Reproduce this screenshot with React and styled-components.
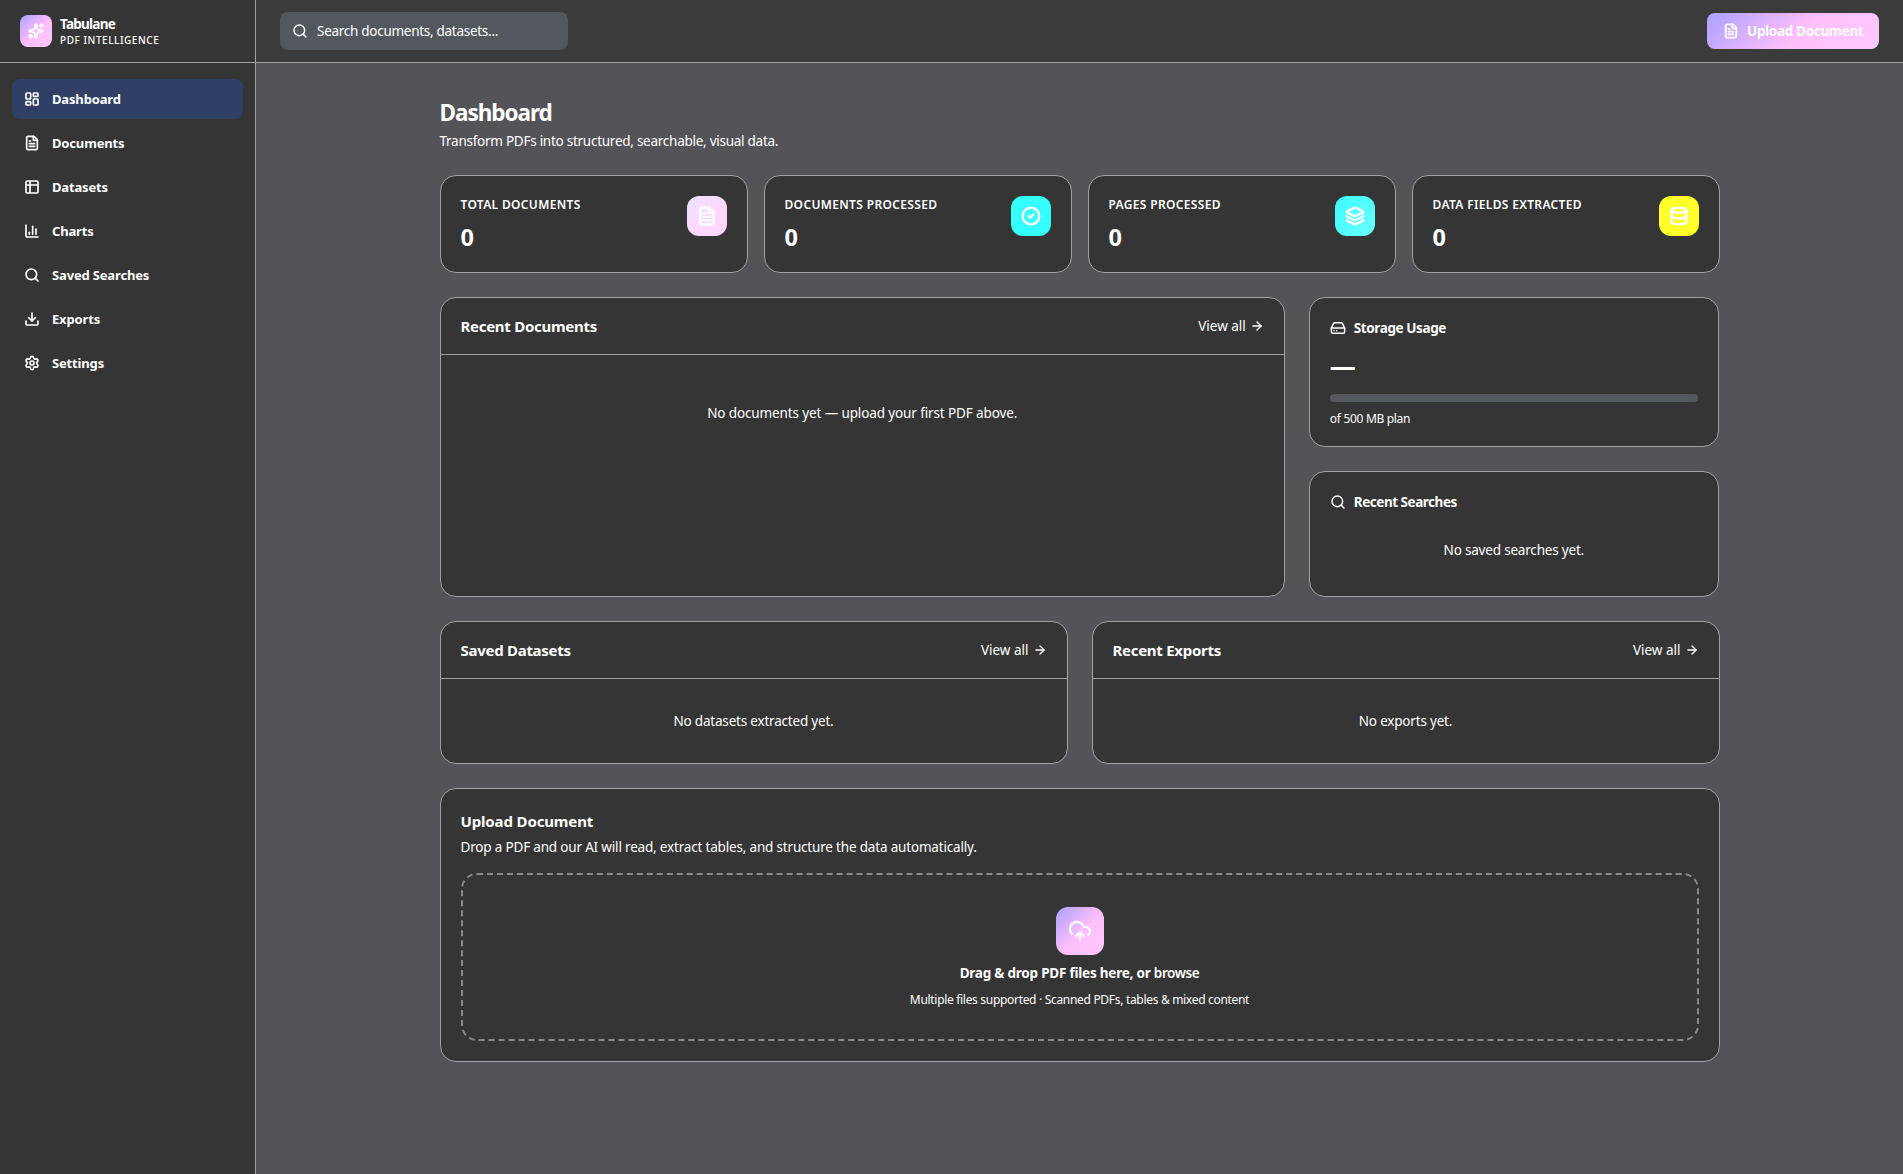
import React from "react";
import styled, { createGlobalStyle } from "styled-components";
import {
  ArrowRight,
  ChartColumn,
  CircleCheck,
  CloudUpload,
  Database,
  Download,
  FileText,
  HardDrive,
  Layers,
  LayoutDashboard,
  Search,
  Settings,
  Sparkles,
  Table2,
} from "lucide-react";

const color = {
  page: "#545358",
  panel: "#353535",
  bar: "#3b3b3b",
  line: "#a2a2a3",
  field: "#53585f",
  meter: "#54575c",
  active: "#2f3f66",
  dash: "#8b8b8b",
};
const brand = "linear-gradient(135deg, #aca0ff 0%, #ffbffb 55%, #ffc8ff 100%)";

const GlobalStyle = createGlobalStyle`
  *, *::before, *::after { box-sizing: border-box; }
  body {
    margin: 0;
    background: ${color.page};
    color: #fff;
    font-family: "Noto Sans", "Open Sans", sans-serif;
    font-size: 13.5px;
    line-height: 20px;
  }
  h1, h2, h3, p { margin: 0; }
  svg { display: block; flex: none; }
`;

const Shell = styled.div`
  display: flex;
  min-height: 1174px;
`;

const Sidebar = styled.aside`
  flex: none;
  width: 256px;
  background: ${color.panel};
  border-right: 1px solid ${color.line};
`;

const Brand = styled.div`
  display: flex;
  align-items: center;
  gap: 8px;
  height: 63px;
  padding: 0 20px;
  border-bottom: 1px solid ${color.line};
`;

const Logo = styled.div`
  display: grid;
  place-items: center;
  width: 32px;
  height: 32px;
  border-radius: 8px;
  background: ${brand};
`;

const BrandName = styled.div`
  padding-top: 1px;
  font-weight: 700;
  line-height: 16px;
  letter-spacing: -0.76px;
`;

const BrandTag = styled.div`
  font-size: 10px;
  font-weight: 500;
  line-height: 16px;
  letter-spacing: 0.55px;
  white-space: nowrap;
`;

const Nav = styled.nav`
  display: flex;
  flex-direction: column;
  gap: 4px;
  padding: 16px 12px;
`;

const NavItem = styled.a`
  display: flex;
  align-items: center;
  gap: 12px;
  height: 40px;
  padding: 0 12px;
  border-radius: 8px;
  background: ${(p) => (p.$active ? color.active : "transparent")};
  font-size: 13px;
  font-weight: 700;
  letter-spacing: -0.16px;
`;

const Column = styled.div`
  flex: 1;
  min-width: 0;
`;

const TopBar = styled.header`
  display: flex;
  align-items: center;
  justify-content: space-between;
  height: 63px;
  padding: 0 24px;
  background: ${color.bar};
  border-bottom: 1px solid ${color.line};
`;

const SearchField = styled.div`
  display: flex;
  align-items: center;
  gap: 9px;
  width: 288px;
  height: 38px;
  padding: 0 12px;
  border-radius: 8px;
  background: ${color.field};
  letter-spacing: -0.28px;
`;

const UploadButton = styled.button`
  display: flex;
  align-items: center;
  gap: 8px;
  width: 172px;
  height: 36px;
  padding: 0 16px;
  border: 0;
  border-radius: 8px;
  background: ${brand};
  color: #fff;
  font: inherit;
  font-weight: 700;
  letter-spacing: -0.32px;
  white-space: nowrap;
`;

const Content = styled.main`
  display: flex;
  flex-direction: column;
  gap: 24px;
  width: 1280px;
  margin: 0 auto;
  padding: 32px 0;
`;

const PageTitle = styled.h1`
  padding-top: 2px;
  font-size: 22.5px;
  font-weight: 700;
  line-height: 32px;
  letter-spacing: -1.02px;
`;

const PageLead = styled.p`
  margin-top: 2px;
  letter-spacing: -0.26px;
`;

const Row = styled.div`
  display: grid;
  grid-template-columns: ${(p) => p.$columns};
  gap: ${(p) => p.$gap || 24}px;
`;

const Stack = styled.div`
  display: flex;
  flex-direction: column;
  gap: 24px;
`;

const Card = styled.section`
  background: ${color.panel};
  border: 1px solid ${color.line};
  border-radius: 16px;
  padding: ${(p) => (p.$flush ? 0 : "20px")};
`;

const StatCard = styled(Card)`
  display: flex;
  align-items: flex-start;
  justify-content: space-between;
  height: 98px;
`;

const StatLabel = styled.div`
  padding-top: 1px;
  font-size: 12px;
  font-weight: 600;
  line-height: 16px;
  letter-spacing: 0.34px;
  text-transform: uppercase;
`;

const StatValue = styled.div`
  margin-top: 8px;
  font-size: 23.5px;
  font-weight: 700;
  line-height: 32px;
`;

const StatIcon = styled.div`
  display: grid;
  place-items: center;
  width: 40px;
  height: 40px;
  border-radius: 12px;
  background: ${(p) => p.$fill};
`;

const CardHead = styled.div`
  display: flex;
  align-items: center;
  justify-content: space-between;
  height: 57px;
  padding: 0 20px;
  border-bottom: 1px solid ${color.line};
`;

const CardTitle = styled.h2`
  font-size: 15px;
  font-weight: 700;
  line-height: 24px;
  letter-spacing: ${(p) => p.$track || -0.28}px;
`;

const ViewAll = styled.a`
  display: flex;
  align-items: center;
  gap: 4px;
`;

const Empty = styled.p`
  padding: ${(p) => p.$pad}px 20px;
  text-align: center;
  letter-spacing: ${(p) => p.$track || -0.19}px;
`;

const SearchEmpty = styled(Empty)`
  padding: 28px 0 16px;
`;

const SideTitle = styled.h3`
  display: flex;
  align-items: center;
  gap: 8px;
  font-size: 13.5px;
  font-weight: 700;
  line-height: 20px;
  letter-spacing: ${(p) => p.$track}px;
`;

const Amount = styled.div`
  margin: 12px 0;
  font-size: 26px;
  font-weight: 700;
  line-height: 32px;
`;

const Meter = styled.div`
  height: 8px;
  border-radius: 4px;
  background: ${color.meter};
`;

const Small = styled.p`
  padding-top: 1px;
  font-size: 12px;
  line-height: 16px;
  letter-spacing: -0.31px;
`;

const PlanNote = styled(Small)`
  height: 16px;
  margin-top: 8px;
`;

const CardLead = styled.p`
  margin-top: 4px;
  letter-spacing: -0.18px;
`;

const DropZone = styled.div`
  display: flex;
  flex-direction: column;
  align-items: center;
  gap: 8px;
  height: 168px;
  margin-top: 16px;
  padding: 32px;
  border: 2px dashed ${color.dash};
  border-radius: 16px;
`;

const DropIcon = styled.div`
  display: grid;
  place-items: center;
  flex: none;
  width: 48px;
  height: 48px;
  border-radius: 12px;
  background: ${brand};
`;

const DropText = styled.p`
  font-weight: 700;
  letter-spacing: -0.22px;
`;

const Browse = styled.span`
  font-weight: 600;
  letter-spacing: -0.39px;
`;

const navItems = [
  ["Dashboard", LayoutDashboard],
  ["Documents", FileText],
  ["Datasets", Table2],
  ["Charts", ChartColumn],
  ["Saved Searches", Search],
  ["Exports", Download],
  ["Settings", Settings],
];

const stats = [
  ["Total Documents", FileText, "linear-gradient(135deg, #ebe2ff, #ffd9fd 55%, #ffd6ff)"],
  ["Documents Processed", CircleCheck, "#36ffff"],
  ["Pages Processed", Layers, "linear-gradient(135deg, #3cfcff, #6affff)"],
  ["Data Fields Extracted", Database, "#ffff2c"],
];

function ListCard({ title, track, empty, pad, emptyTrack }) {
  return (
    <Card $flush>
      <CardHead>
        <CardTitle $track={track}>{title}</CardTitle>
        <ViewAll>
          View all <ArrowRight size={14} strokeWidth={2.4} />
        </ViewAll>
      </CardHead>
      <Empty $pad={pad} $track={emptyTrack}>
        {empty}
      </Empty>
    </Card>
  );
}

export default function App() {
  return (
    <>
      <GlobalStyle />
      <Shell>
        <Sidebar>
          <Brand>
            <Logo>
              <Sparkles size={16} strokeWidth={2.8} />
            </Logo>
            <div>
              <BrandName>Tabulane</BrandName>
              <BrandTag>PDF INTELLIGENCE</BrandTag>
            </div>
          </Brand>
          <Nav>
            {navItems.map(([name, Icon], i) => (
              <NavItem key={name} $active={i === 0}>
                <Icon size={16} strokeWidth={2.5} />
                {name}
              </NavItem>
            ))}
          </Nav>
        </Sidebar>
        <Column>
          <TopBar>
            <SearchField>
              <Search size={16} strokeWidth={2.2} />
              Search documents, datasets...
            </SearchField>
            <UploadButton>
              <FileText size={16} strokeWidth={2.8} />
              Upload Document
            </UploadButton>
          </TopBar>
          <Content>
            <div>
              <PageTitle>Dashboard</PageTitle>
              <PageLead>Transform PDFs into structured, searchable, visual data.</PageLead>
            </div>
            <Row $columns="repeat(4, 1fr)" $gap={16}>
              {stats.map(([label, Icon, fill]) => (
                <StatCard key={label}>
                  <div>
                    <StatLabel>{label}</StatLabel>
                    <StatValue>0</StatValue>
                  </div>
                  <StatIcon $fill={fill}>
                    <Icon size={20} strokeWidth={2.9} />
                  </StatIcon>
                </StatCard>
              ))}
            </Row>
            <Row $columns="845.33px 410px">
              <ListCard
                title="Recent Documents"
                empty="No documents yet — upload your first PDF above."
                pad={48}
                emptyTrack={-0.12}
              />
              <Stack>
                <Card>
                  <SideTitle $track={-0.4}>
                    <HardDrive size={16} strokeWidth={2.2} />
                    Storage Usage
                  </SideTitle>
                  <Amount>—</Amount>
                  <Meter />
                  <PlanNote>of 500 MB plan</PlanNote>
                </Card>
                <Card>
                  <SideTitle $track={-0.47}>
                    <Search size={16} strokeWidth={2.2} />
                    Recent Searches
                  </SideTitle>
                  <SearchEmpty>No saved searches yet.</SearchEmpty>
                </Card>
              </Stack>
            </Row>
            <Row $columns="1fr 1fr">
              <ListCard title="Saved Datasets" empty="No datasets extracted yet." pad={32} emptyTrack={-0.2} />
              <ListCard title="Recent Exports" empty="No exports yet." pad={32} />
            </Row>
            <Card>
              <CardTitle $track={-0.14}>Upload Document</CardTitle>
              <CardLead>
                Drop a PDF and our AI will read, extract tables, and structure the data automatically.
              </CardLead>
              <DropZone>
                <DropIcon>
                  <CloudUpload size={24} strokeWidth={2.2} />
                </DropIcon>
                <DropText>
                  Drag &amp; drop PDF files here, or <Browse>browse</Browse>
                </DropText>
                <Small>Multiple files supported · Scanned PDFs, tables &amp; mixed content</Small>
              </DropZone>
            </Card>
          </Content>
        </Column>
      </Shell>
    </>
  );
}
